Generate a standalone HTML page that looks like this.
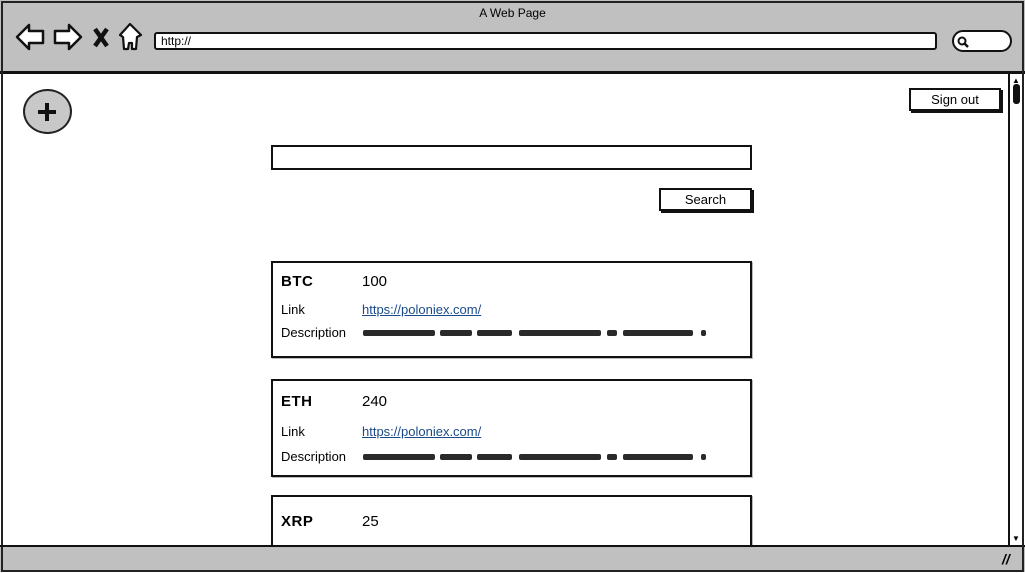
<!DOCTYPE html>
<html><head><style>
*{margin:0;padding:0;box-sizing:border-box}
body{width:1025px;height:573px;overflow:hidden;background:#fff;font-family:"Liberation Sans",sans-serif;color:#000;position:relative}
.a{position:absolute}
.frame{left:1px;top:1px;width:1023px;height:571px;border:2px solid #222;}
.card{left:271px;width:481px;border:2px solid #111;background:#fff;box-shadow:1px 1px 0 #bbb}
.t{position:absolute;font-size:13px}
.b{font-weight:bold;font-size:15px;letter-spacing:.5px}
.v{font-size:15px}
.lnk{color:#1a4a8a;text-decoration:underline}
.sc{position:absolute;height:6px;background:#2a2a2a;border-radius:2px}
</style></head><body>
<div class="a" style="left:0;top:0;width:1025px;height:72px;background:#c0c0c0"></div>
<div class="a" style="left:0;top:71px;width:1025px;height:3px;background:#111"></div>
<div class="a" style="left:0;top:545px;width:1025px;height:27px;background:#c0c0c0;border-top:2px solid #111"></div>
<div class="a frame"></div>
<div class="a" style="left:0;top:6px;width:1025px;text-align:center;font-size:12px">A Web Page</div>
<svg class="a" style="left:14px;top:20px" width="135" height="34">
<path d="M3 17 L15 5 L15 11 L29 11 L29 23 L15 23 L15 29 Z" fill="#fff" stroke="#111" stroke-width="2.5" stroke-linejoin="round"/>
<path d="M67 17 L55 5 L55 11 L41 11 L41 23 L55 23 L55 29 Z" fill="#fff" stroke="#111" stroke-width="2.5" stroke-linejoin="round"/>
<path d="M81 9 L93 26 M93 9 L81 26" stroke="#111" stroke-width="4.5"/>
<path d="M116 4 L106 15 L109 17 L110 29 L114 29 L115 23 L118 23 L118 29 L122 29 L123 17 L127 15 Z" fill="#fff" stroke="#111" stroke-width="2.2" stroke-linejoin="round"/>
</svg>
<div class="a" style="left:154px;top:32px;width:783px;height:18px;background:#fff;border:2px solid #111;border-radius:3px;font-size:12px;padding-left:5px;line-height:14px">http://</div>
<div class="a" style="left:952px;top:30px;width:60px;height:22px;background:#fff;border:2px solid #111;border-radius:12px"></div>
<svg class="a" style="left:956px;top:35px" width="14" height="14"><circle cx="6" cy="6" r="3.5" fill="none" stroke="#111" stroke-width="2"/><path d="M8 8 L12 12" stroke="#111" stroke-width="2.5"/></svg>
<div class="a" style="left:1008px;top:74px;width:14px;height:471px;border-left:2px solid #111;background:#fff"></div>
<div class="a" style="left:1012px;top:76px;font-size:8px">▲</div>
<div class="a" style="left:1013px;top:84px;width:7px;height:20px;background:#111;border-radius:3px"></div>
<div class="a" style="left:1012px;top:534px;font-size:8px">▼</div>
<div class="a" style="left:1002px;top:551px;font-size:14px;font-weight:bold;font-style:italic">//</div>
<div class="a" style="left:23px;top:89px;width:49px;height:45px;border-radius:50%;background:#c8c8c8;border:2px solid #222"></div>
<div class="a" style="left:38px;top:110px;width:18px;height:4px;background:#111"></div>
<div class="a" style="left:45px;top:103px;width:4px;height:18px;background:#111"></div>
<div class="a" style="left:909px;top:88px;width:92px;height:23px;border:2px solid #111;background:#fff;box-shadow:2px 2px 0 #111;text-align:center;font-size:13px;line-height:19px">Sign out</div>
<div class="a" style="left:271px;top:145px;width:481px;height:25px;border:2px solid #111;background:#fff"></div>
<div class="a" style="left:659px;top:188px;width:93px;height:23px;border:2px solid #111;background:#fff;box-shadow:2px 2px 0 #111;text-align:center;font-size:13px;line-height:19px">Search</div>

<div class="a card" style="top:261px;height:97px">
<div class="t b" style="left:8px;top:10px">BTC</div><div class="t v" style="left:89px;top:10px">100</div>
<div class="t" style="left:8px;top:39px">Link</div><div class="t lnk" style="left:89px;top:39px">https://poloniex.com/</div>
<div class="t" style="left:8px;top:62px">Description</div>
<div class="sc" style="left:90px;top:67px;width:72px"></div><div class="sc" style="left:167px;top:67px;width:32px"></div><div class="sc" style="left:204px;top:67px;width:35px"></div><div class="sc" style="left:246px;top:67px;width:82px"></div><div class="sc" style="left:334px;top:67px;width:10px"></div><div class="sc" style="left:350px;top:67px;width:70px"></div><div class="sc" style="left:428px;top:67px;width:5px"></div>
</div>
<div class="a card" style="top:379px;height:98px">
<div class="t b" style="left:8px;top:12px">ETH</div><div class="t v" style="left:89px;top:12px">240</div>
<div class="t" style="left:8px;top:43px">Link</div><div class="t lnk" style="left:89px;top:43px">https://poloniex.com/</div>
<div class="t" style="left:8px;top:68px">Description</div>
<div class="sc" style="left:90px;top:73px;width:72px"></div><div class="sc" style="left:167px;top:73px;width:32px"></div><div class="sc" style="left:204px;top:73px;width:35px"></div><div class="sc" style="left:246px;top:73px;width:82px"></div><div class="sc" style="left:334px;top:73px;width:10px"></div><div class="sc" style="left:350px;top:73px;width:70px"></div><div class="sc" style="left:428px;top:73px;width:5px"></div>
</div>
<div class="a card" style="top:495px;height:52px;border-bottom:none">
<div class="t b" style="left:8px;top:16px">XRP</div><div class="t v" style="left:89px;top:16px">25</div>
</div>
<div class="a" style="left:0;top:545px;width:1008px;height:2px;background:#111"></div>
</body></html>
